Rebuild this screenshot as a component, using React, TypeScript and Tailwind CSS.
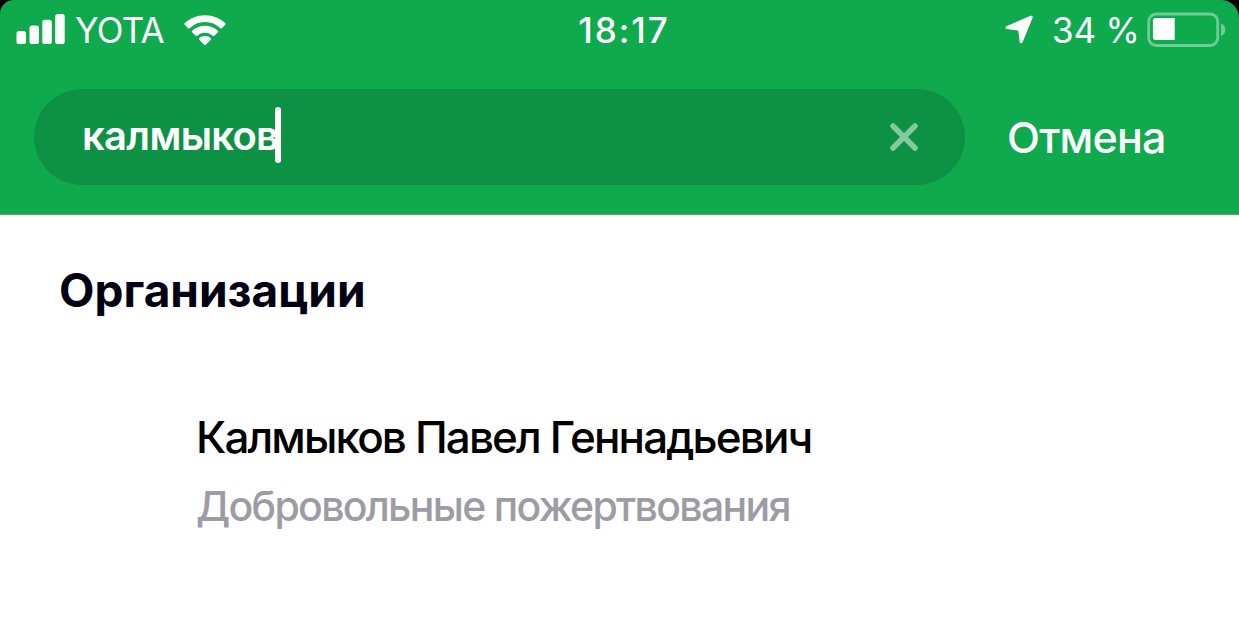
function SignalIcon() {
  return (
    <svg width="50" height="32" viewBox="0 0 50 32" fill="white" className="shrink-0">
      <rect x="0.5" y="17" width="9.5" height="13" rx="2.6" />
      <rect x="13.5" y="11.5" width="9.5" height="18.5" rx="2.6" />
      <rect x="26.3" y="5.7" width="9.5" height="24.3" rx="2.6" />
      <rect x="39.2" y="0" width="9.5" height="30" rx="2.6" />
    </svg>
  );
}

function WifiIcon() {
  return (
    <svg width="42" height="32" viewBox="0 0 42 32" fill="white" className="shrink-0">
      <path d="M21 0.2C28.9 0.2 36.2 3.2 41.4 8.3L41.5 9.6L37.6 13.4L36.6 13.4C32.4 9.2 27 7 21 7S9.6 9.2 5.4 13.4L4.4 13.4L0.5 9.6L0.6 8.3C5.8 3.2 13.1 0.2 21 0.2Z" />
      <path d="M21 10.7C26.1 10.7 30.7 12.7 34.1 15.9L34.1 17.1L30.1 21L29 21C26.8 18.9 24 17.7 21 17.7S15.2 18.9 13 21L11.9 21L7.9 17.1L7.9 15.9C11.3 12.7 15.9 10.7 21 10.7Z" />
      <path d="M21 21C23.4 21 25.4 21.9 26.9 23.3L26.9 24.4L21.6 30L20.4 30L15.1 24.4L15.1 23.3C16.6 21.9 18.6 21 21 21Z" />
    </svg>
  );
}

function LocationIcon() {
  return (
    <svg width="30" height="30" viewBox="0 0 30 30" className="shrink-0">
      <path
        d="M2 12.6L26.2 2.2L16.2 26.8L14.6 14.2Z"
        fill="white"
        stroke="white"
        strokeWidth="3"
        strokeLinejoin="round"
      />
    </svg>
  );
}

function BatteryIcon() {
  return (
    <svg width="80" height="36" viewBox="0 0 80 36" className="shrink-0">
      <rect x="1.7" y="2" width="69" height="31.5" rx="7.5" fill="none" stroke="white" strokeOpacity="0.4" strokeWidth="2.8" />
      <path d="M27.7 6H8.5Q5.9 6 5.9 8.6V25Q5.9 28 8.5 28H27.7Z" fill="white" />
      <path d="M74 11.5C79.8 13.5 79.8 22 74 24Z" fill="white" fillOpacity="0.4" />
    </svg>
  );
}

function StatusBar() {
  return (
    <div className="grid h-[60px] grid-cols-[1fr_auto_1fr] items-center text-[35px] leading-[60px] text-white">
      <div className="flex items-center pl-[16px]">
        <SignalIcon />
        <span className="ml-[9px] w-[90px] font-normal tracking-[-0.8px]">YOTA</span>
        <div className="ml-[19px] pt-px">
          <WifiIcon />
        </div>
      </div>
      <span className="pl-[9px] font-[550] tracking-[2px]">18:17</span>
      <div className="flex items-center justify-end pr-[12px]">
        <LocationIcon />
        <span className="ml-[17px] w-[87px] whitespace-nowrap font-normal tracking-[-0.2px]">34 %</span>
        <div className="ml-[8px]">
          <BatteryIcon />
        </div>
      </div>
    </div>
  );
}

function SearchRow() {
  return (
    <div className="flex items-center pl-[34px] pt-[29px]">
      <div className="flex h-[96px] w-[931px] items-center rounded-full bg-[#0d9145] pl-[48px] pr-[47px]">
        <span className="pb-[3px] text-[40px] font-semibold leading-[90px] tracking-[-0.7px] text-white">калмыков</span>
        <span className="-ml-[3px] h-[56px] w-[6px] -translate-y-[2px] rounded-full bg-white" />
        <svg width="28" height="28" viewBox="0 0 28 28" className="ml-auto">
          <path d="M3 3L25 25M25 3L3 25" stroke="#85cb9f" strokeWidth="5.5" strokeLinecap="round" />
        </svg>
      </div>
      <button className="ml-[42px] whitespace-nowrap text-[43px] font-medium leading-[96px] tracking-[-0.8px] text-white">Отмена</button>
    </div>
  );
}

export default function App() {
  return (
    <div className="h-[619px] w-[1239px] overflow-hidden bg-white font-['Inter','Liberation_Sans',sans-serif]">
      <div className="bg-black">
        <header className="h-[215px] rounded-tl-[14px] rounded-tr-[18px] border-b border-[#5a9f74] bg-[#0faa4e]">
          <StatusBar />
          <SearchRow />
        </header>
      </div>
      <main>
        <h2 className="pl-[59px] pt-[45px] text-[46px] font-bold leading-[60px] text-[#030014]">
          Организации
        </h2>
        <div className="pl-[196px] pt-[87px]">
          <div className="text-[44px] font-medium leading-[60px] tracking-[-1.87px] text-black">
            Калмыков Павел Геннадьевич
          </div>
          <div className="mt-[9px] text-[41px] font-medium leading-[60px] tracking-[-1.7px] text-[#9d9ca4]">
            Добровольные пожертвования
          </div>
        </div>
      </main>
    </div>
  );
}
